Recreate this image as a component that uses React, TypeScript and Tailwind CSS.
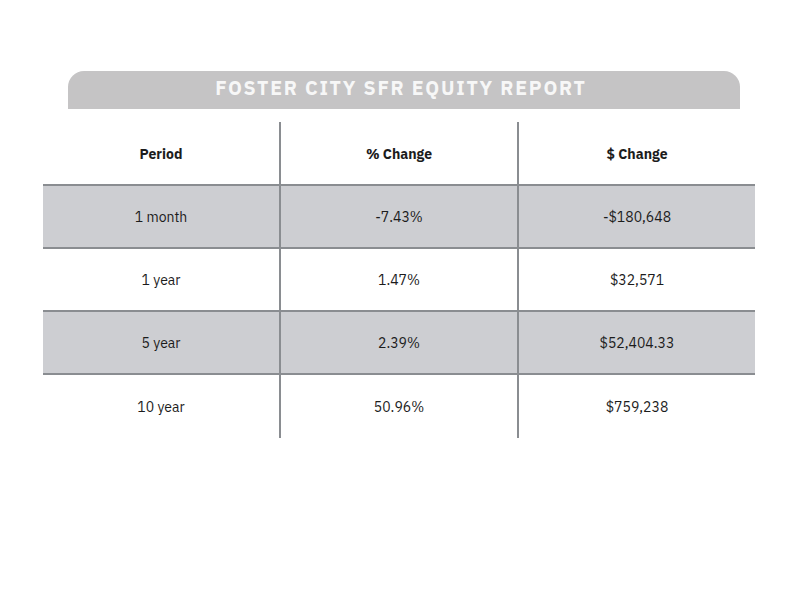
const rows = [
  { period: "1 month", pct: "-7.43%", usd: "-$180,648", shaded: true },
  { period: "1 year", pct: "1.47%", usd: "$32,571", shaded: false },
  { period: "5 year", pct: "2.39%", usd: "$52,404.33", shaded: true },
  { period: "10 year", pct: "50.96%", usd: "$759,238", shaded: false },
];

export default function App() {
  return (
    <div
      className="h-[600px] w-[800px] bg-white pt-[71px] text-[#1c1c1c]"
      style={{ fontFamily: '"IBM Plex Sans", "Noto Sans", "Open Sans", sans-serif' }}
    >
      <div className="ml-[68px] flex h-[38px] w-[672px] items-center justify-center rounded-t-[16px] bg-[#c5c4c5] pb-[4px]">
        <h1 className="-ml-[6px] text-[19.5px] font-bold tracking-[1.75px] text-[#f7f7f7]">
          FOSTER CITY SFR EQUITY REPORT
        </h1>
      </div>

      <div className="ml-[43px] mt-[13px] w-[712px]">
        <div className="flex h-[64px] border-b-2 border-[#8a8d91] text-[14px] font-bold">
          <div className="flex w-[238px] items-center justify-center border-r-2 border-[#8a8d91] pt-[2px]">
            Period
          </div>
          <div className="flex w-[238px] items-center justify-center border-r-2 border-[#8a8d91] pt-[2px]">
            % Change
          </div>
          <div className="flex w-[236px] items-center justify-center pt-[2px]">$ Change</div>
        </div>

        {rows.map((row, i) => (
          <div
            key={row.period}
            className={`flex h-[63px] text-[14px] ${
              i < rows.length - 1 ? "border-b-2 border-[#8a8d91]" : ""
            } ${row.shaded ? "bg-[#cdced2]" : "bg-white"}`}
          >
            <div className="flex w-[238px] items-center justify-center border-r-2 border-[#8a8d91] pt-[1px]">
              {row.period}
            </div>
            <div className="flex w-[238px] items-center justify-center border-r-2 border-[#8a8d91] pt-[1px]">
              {row.pct}
            </div>
            <div className="flex w-[236px] items-center justify-center pt-[1px]">{row.usd}</div>
          </div>
        ))}
      </div>
    </div>
  );
}
